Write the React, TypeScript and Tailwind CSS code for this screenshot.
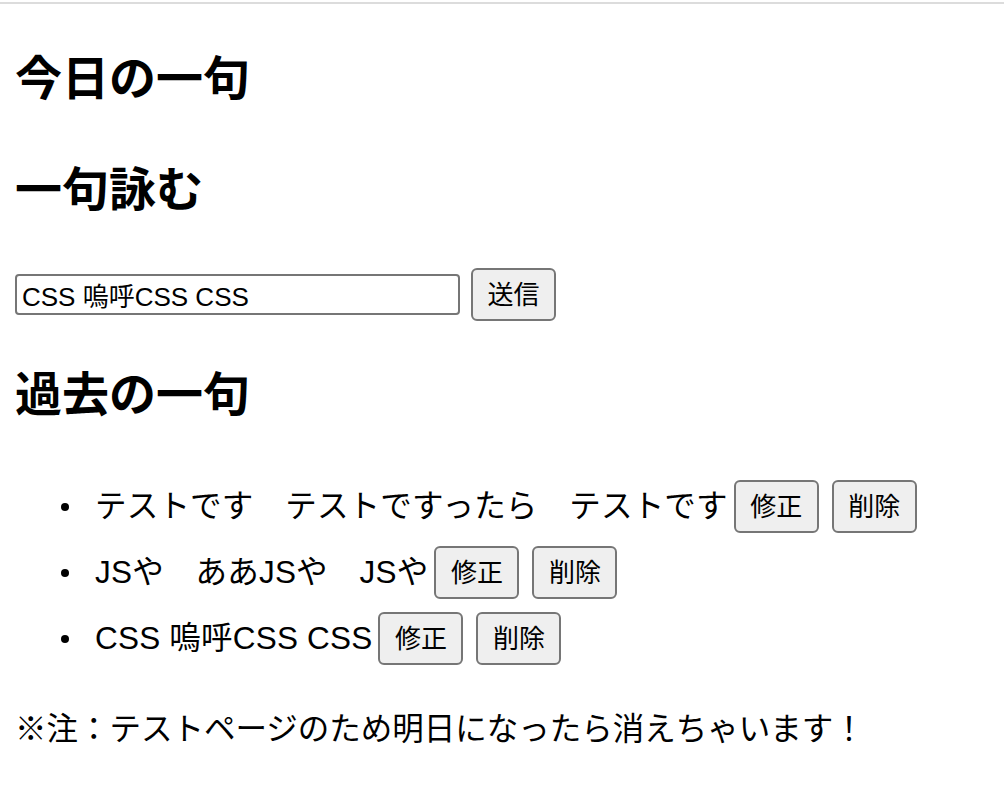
const FONT = "font-['Liberation_Sans','Noto_Sans_CJK_JP',sans-serif]";

const HAIKU = [
  "テストです　テストですったら　テストです",
  "JSや　ああJSや　JSや",
  "CSS 嗚呼CSS CSS",
];

function Btn({ label }: { label: string }) {
  return (
    <button className="w-[85px] h-[53px] shrink-0 rounded-[6px] border-2 border-[#767676] bg-[#efefef] text-[26px] leading-none text-black">
      {label}
    </button>
  );
}

export default function App() {
  return (
    <div className={`${FONT} min-h-[804px] bg-white text-black`}>
      <div className="pt-[2px]">
        <div className="h-[2px] bg-[#dcdcdc]" />
      </div>
      <div className="px-[15px]">
        <h1 className="mt-[47px] text-[47px] font-bold leading-[56px]">今日の一句</h1>
        <h2 className="mt-[55px] text-[47px] font-bold leading-[56px]">一句詠む</h2>

        <form className="mt-[50px] flex items-center gap-[11px]" onSubmit={e => e.preventDefault()}>
          <input
            defaultValue="CSS 嗚呼CSS CSS"
            className="w-[445px] h-[41px] rounded-[4px] border-2 border-[#767676] px-[5px] text-[26px] text-black outline-none"
          />
          <Btn label="送信" />
        </form>

        <h2 className="mt-[46px] text-[47px] font-bold leading-[56px]">過去の一句</h2>

        <ul className="mt-[57px] flex flex-col gap-[13px]">
          {HAIKU.map(h => (
            <li key={h} className="flex items-center h-[53px]">
              <span className="ml-[46px] w-[8px] h-[8px] rounded-full bg-black" />
              <span className="ml-[26px] text-[31.5px] leading-none whitespace-pre tracking-[0.2px]">{h}</span>
              <div className="ml-[6px] flex gap-[13px]">
                <Btn label="修正" />
                <Btn label="削除" />
              </div>
            </li>
          ))}
        </ul>

        <p className="mt-[44px] text-[31.5px] leading-[40px]">※注：テストページのため明日になったら消えちゃいます！</p>
      </div>
    </div>
  );
}
